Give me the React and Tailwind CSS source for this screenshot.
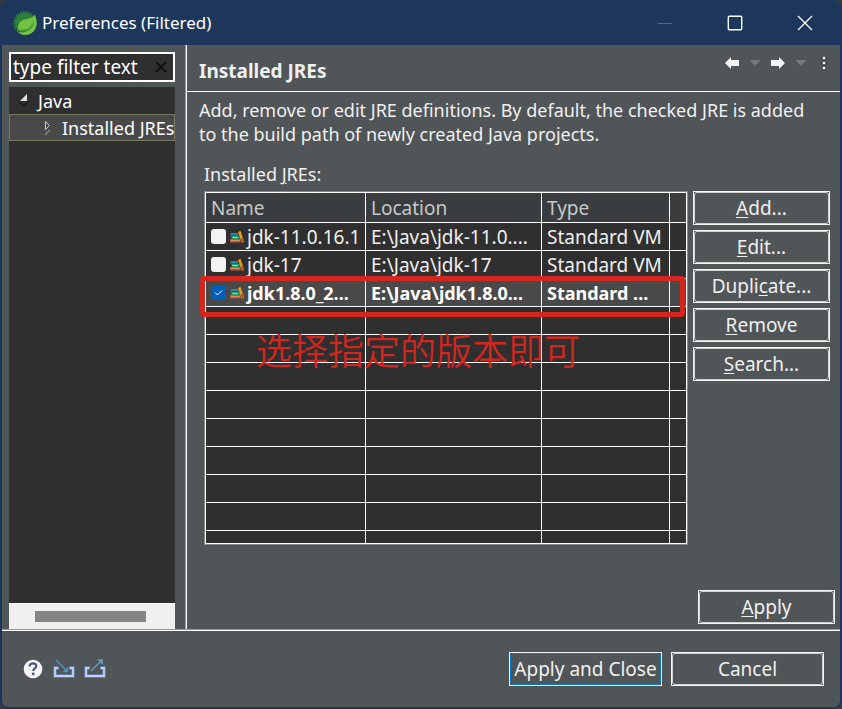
import React, { useState } from "react";

const jres = [
  { id: "jdk11", name: "jdk-11.0.16.1", location: "E:\\Java\\jdk-11.0....", type: "Standard VM" },
  { id: "jdk17", name: "jdk-17", location: "E:\\Java\\jdk-17", type: "Standard VM" },
  { id: "jdk8", name: "jdk1.8.0_2...", location: "E:\\Java\\jdk1.8.0...", type: "Standard ..." },
];

const emptyRows = [1, 2, 3, 4, 5, 6, 7, 8];

function SpringLogo() {
  return (
    <svg className="size-6 shrink-0" viewBox="0 0 24 24" aria-hidden="true">
      <circle cx="12" cy="12" r="10.500" fill="#2a8038" />
      <circle cx="12" cy="12" r="11.200" fill="none" stroke="#2f8a3c" strokeWidth="1.400" strokeDasharray="1.500 1.300" />
      <path d="M22 4c2.500 6 2.500 12-1.500 16.500-4.500 4.500-11.500 4.500-15.500.5 7 1 12.500-1 16-8-4 5-9 6.500-15.500 5.500-1.500-4 .5-8 4.500-9.500 4.500-1.500 8.500-1 12-5z" fill="#74c244" />
      <path d="M4 19c7 2 13.500-.5 17-8" fill="none" stroke="#4ea23a" strokeWidth="1.200" />
    </svg>
  );
}

function Books() {
  return (
    <svg className="h-4 w-4 shrink-0" viewBox="0 0 16 16" aria-hidden="true">
      <path d="M1.500 4h7.500v2H1.500z" fill="#2586a5" />
      <path d="M1 6h8v1H1z" fill="#146b88" />
      <path d="M2.500 7h8v3h-8z" fill="#2d9b67" />
      <path d="M3.500 8h5v1h-5z" fill="#a7d8b4" />
      <path d="M1 10h10.500v3.500H1z" fill="#b75b36" />
      <path d="M2 11h8.500v1H2z" fill="#dc9168" />
      <path d="M9 3l2.500-1.300 3.700 11.300-2.500.8z" fill="#e59a20" />
      <path d="M11.500 9.500l2.500-.8 1.300 4.300-2.500.8z" fill="#b45e18" />
    </svg>
  );
}

function Arrow({ right }) {
  return (
    <svg className="h-3 w-[14px]" viewBox="0 0 14 12" aria-hidden="true">
      <path
        d={right ? "M14 6L8 0v3H0v6h8v3z" : "M0 6L6 0v3h8v6H6v3z"}
        fill="#f4f4f4"
      />
    </svg>
  );
}

function Caret() {
  return (
    <svg className="h-[6px] w-3" viewBox="0 0 12 6" aria-hidden="true">
      <path d="M.5 0h11L6 6z" fill="#75797b" />
    </svg>
  );
}

function Tray({ out }) {
  return (
    <svg className="h-5 w-[22px]" viewBox="0 0 22 20" aria-hidden="true">
      <path d="M5.500 9H2v8h18V9h-3.500" fill="none" stroke="#6384bd" strokeWidth="3.400" />
      <path d="M5.500 9H2v8h18V9h-3.500" fill="none" stroke="#c3d3f0" strokeWidth="1.800" />
      {out ? (
        <g fill="#62a0c4" stroke="#62a0c4">
          <path d="M7 12L17 2" fill="none" strokeWidth="1.500" />
          <path d="M13.500 .5H18.500v5z" strokeWidth=".5" />
        </g>
      ) : (
        <g fill="#4f92b8" stroke="#4f92b8">
          <path d="M3 1l11 11" fill="none" strokeWidth="1.500" />
          <path d="M15 8v5h-5z" strokeWidth=".5" />
        </g>
      )}
    </svg>
  );
}

function DialogButton({ children, wide, primary }) {
  return (
    <button
      type="button"
      className={
        "flex h-[34px] border border-[#f4f4f4] whitespace-nowrap " +
        (wide ? "w-[153px]" : "w-[137px]")
      }
    >
      <span
        className={
          "flex h-full w-full items-center justify-center rounded-[3px] border " +
          (primary ? "border-[#0078d4]" : "border-[#d2d2d2]")
        }
      >
        <span>{children}</span>
      </span>
    </button>
  );
}

function Key({ children }) {
  return <span className="underline decoration-1 underline-offset-2">{children}</span>;
}

export default function App() {
  const [filter, setFilter] = useState("type filter text");
  const [checked, setChecked] = useState("jdk8");
  const cell = "border-r border-b border-white p-0 pl-[5px] text-left whitespace-nowrap overflow-hidden";

  return (
    <div className="bg-[#3a3a3a] font-['Noto_Sans','Noto_Sans_CJK_SC',sans-serif] text-[19px] leading-6 text-[#f0f0f0]">
      <div className="flex min-h-screen flex-col overflow-hidden rounded-lg border-x-2 border-b-2 border-[#1c375b] bg-[#505557]">
        <header className="flex h-[45px] shrink-0 items-center bg-[#1c375b] pl-[11px] text-white">
          <SpringLogo />
          <h1 className="ml-[5px] flex-1 text-[17px]">Preferences (Filtered)</h1>
          <button type="button" aria-label="Minimize" className="grid h-full w-[70px] place-items-center">
            <svg className="size-4" viewBox="0 0 16 16"><path d="M.5 8.500h15" stroke="#53667f" /></svg>
          </button>
          <button type="button" aria-label="Maximize" className="grid h-full w-[70px] place-items-center">
            <svg className="size-4" viewBox="0 0 16 16"><rect x="1.300" y="1.300" width="13.400" height="13.400" rx="1" fill="none" stroke="#fff" strokeWidth="1.400" /></svg>
          </button>
          <button type="button" aria-label="Close" className="grid h-full w-[70px] place-items-center">
            <svg className="size-4" viewBox="0 0 16 16"><path d="M1 1l14 14M15 1L1 15" stroke="#fff" strokeWidth="1.300" /></svg>
          </button>
        </header>

        <div className="flex flex-1">
          <aside className="flex w-[183px] shrink-0 flex-col pt-[7px] pr-[10px] pl-[7px]">
            <div className="flex h-[30px] items-center border-2 border-white bg-[#2f2f2f]">
              <input
                type="text"
                aria-label="Filter"
                value={filter}
                onChange={(e) => setFilter(e.target.value)}
                className="h-full min-w-0 flex-1 bg-transparent pl-[2px] text-white outline-none"
              />
              <button type="button" aria-label="Clear filter" onClick={() => setFilter("")} className="grid h-full w-6 place-items-center">
                <svg className="size-3" viewBox="0 0 12 12"><path d="M1 1l10 10M11 1L1 11" stroke="#111" strokeWidth="2" /></svg>
              </button>
            </div>
            <ul className="mt-[5px] flex-1 bg-[#2f2f2f] text-[18px] text-white">
              <li className="flex h-[27px] items-center pl-[9px]">
                <svg className="mr-[5px] h-4 w-[15px]" viewBox="0 0 15 16" aria-hidden="true">
                  <path d="M9 1v7H2z" fill="#e0e0e0" />
                  <path d="M1 9l5 4 4-4" fill="none" stroke="#191919" strokeWidth="1.500" />
                </svg>
                Java
              </li>
              <li className="flex h-[27px] items-center border border-[#77775f] bg-[#494949] pl-[33px] whitespace-nowrap">
                <svg className="mr-[9px] h-4 w-[10px] shrink-0" viewBox="0 0 10 16" aria-hidden="true">
                  <path d="M2.500 1.500v8L6.500 5.500z" fill="none" stroke="#ccc" />
                  <path d="M2 15l5-5" stroke="#888" strokeWidth="1.500" />
                </svg>
                Installed JREs
              </li>
            </ul>
            <div className="flex h-[26px] items-center border-t border-white bg-[#f0f0f0] pl-[26px]">
              <div className="h-[11px] w-[111px] bg-[#858585]" />
            </div>
          </aside>
          <div className="w-[2px] shrink-0 border-l border-[#9b9b93] bg-white" />

          <main className="flex min-w-0 flex-1 flex-col">
            <div className="flex h-[47px] items-center justify-between border-b border-white pr-[13px] pl-3">
              <h2 className="pt-[6px] font-bold">Installed JREs</h2>
              <div className="mb-[10px] flex items-center">
                <button type="button" aria-label="Back"><Arrow /></button>
                <button type="button" aria-label="Back history" className="ml-[10px]"><Caret /></button>
                <button type="button" aria-label="Forward" className="ml-[10px]"><Arrow right /></button>
                <button type="button" aria-label="Forward history" className="ml-[10px]"><Caret /></button>
                <button type="button" aria-label="View menu" className="ml-[14px]">
                  <svg className="h-4 w-[6px]" viewBox="0 0 6 16" aria-hidden="true">
                    <g fill="#fff" stroke="#333" strokeWidth="1"><circle cx="3" cy="3" r="2" /><circle cx="3" cy="8" r="2" /><circle cx="3" cy="13" r="2" /></g>
                  </svg>
                </button>
              </div>
            </div>

            <p className="pt-[6px] pr-5 pl-3 text-[18px]">
              Add, remove or edit JRE definitions. By default, the checked JRE is added to the build path of newly created Java projects.
            </p>
            <p className="mt-4 pl-[17px] text-[18px]">Installed <Key>J</Key>REs:</p>

            <div className="mt-[5px] flex items-start gap-[5px] pr-[10px] pl-[17px]">
              <div className="relative min-w-0 flex-1 border border-[#858a8d] bg-[#2f2f2f]">
                <table className="w-full table-fixed border-separate border-spacing-0 border-t border-l border-white">
                  <colgroup>
                    <col className="w-[160px]" />
                    <col className="w-[176px]" />
                    <col className="w-[128px]" />
                    <col />
                  </colgroup>
                  <thead>
                    <tr className="h-[30px] bg-[#393d3f] text-[#c8c8c8]">
                      <th className={cell + " font-normal"}>Name</th>
                      <th className={cell + " font-normal"}>Location</th>
                      <th className={cell + " font-normal"}>Type</th>
                      <td className={cell} />
                    </tr>
                  </thead>
                  <tbody>
                    {jres.map((jre) => (
                      <tr key={jre.id} className={jre.id === "jdk8" ? "h-7 bg-[#494949] text-[18px] font-bold text-white" : "h-7"}>
                        <td className={cell}>
                          <label className="flex items-center">
                            <span className="relative mr-[3px] size-[15px] shrink-0">
                              <input
                                type="checkbox"
                                checked={checked === jre.id}
                                onChange={() => setChecked(jre.id)}
                                className="block size-[15px] appearance-none rounded-[3px] bg-[#f3f3f3] checked:bg-[#005fb8]"
                              />
                              {checked === jre.id && (
                                <svg className="pointer-events-none absolute inset-0 size-[15px]" viewBox="0 0 15 15" aria-hidden="true">
                                  <path d="M4 7.500L6.500 10 11 5.500" fill="none" stroke="#fff" />
                                </svg>
                              )}
                            </span>
                            <Books />
                            <span className="ml-[2px]">{jre.name}</span>
                          </label>
                        </td>
                        <td className={cell}>{jre.location}</td>
                        <td className={cell}>{jre.type}</td>
                        <td className={cell} />
                      </tr>
                    ))}
                    {emptyRows.map((n) => (
                      <tr key={n} className="h-7">
                        <td className={cell} />
                        <td className={cell} />
                        <td className={cell} />
                        <td className={cell} />
                      </tr>
                    ))}
                    <tr className="h-[13px]">
                      <td className={cell} />
                      <td className={cell} />
                      <td className={cell} />
                      <td className={cell} />
                    </tr>
                  </tbody>
                </table>
                <div className="pointer-events-none absolute top-[84px] right-[2px] -left-[5px] h-[41px] rounded-sm border-5 border-[#d2261f]" />
                <p className="pointer-events-none absolute top-[140px] left-[51px] text-[36px] leading-10 font-[350] whitespace-nowrap text-[#d2261f]">选择指定的版本即可</p>
              </div>
              <div className="flex flex-col gap-[5px]">
                <DialogButton><Key>A</Key>dd...</DialogButton>
                <DialogButton><Key>E</Key>dit...</DialogButton>
                <DialogButton>Dupli<Key>c</Key>ate...</DialogButton>
                <DialogButton><Key>R</Key>emove</DialogButton>
                <DialogButton><Key>S</Key>earch...</DialogButton>
              </div>
            </div>

            <div className="mt-auto flex justify-end pr-[5px] pb-[5px]">
              <DialogButton><Key>A</Key>pply</DialogButton>
            </div>
          </main>
        </div>

        <footer className="flex items-center border-t border-[#9b9b93]">
          <div className="flex flex-1 items-center border-t border-white py-[21px] pr-4 pl-[21px]">
            <button type="button" aria-label="Help">
              <svg className="size-5" viewBox="0 0 20 20" aria-hidden="true">
                <circle cx="10" cy="10" r="9.300" fill="#f6f6f6" />
                <path d="M6.500 7.500C6.500 3 13.800 3.500 13.300 7.300 13 9.500 10.200 9.300 10.200 12" fill="none" stroke="#44597c" strokeWidth="2.200" />
                <circle cx="10.200" cy="15" r="1.400" fill="#44597c" />
              </svg>
            </button>
            <button type="button" aria-label="Import" className="ml-[10px]"><Tray /></button>
            <button type="button" aria-label="Export" className="ml-[9px]"><Tray out /></button>
            <div className="ml-auto flex gap-[9px]">
              <DialogButton wide primary>Apply and Close</DialogButton>
              <DialogButton wide>Cancel</DialogButton>
            </div>
          </div>
        </footer>
      </div>
    </div>
  );
}
